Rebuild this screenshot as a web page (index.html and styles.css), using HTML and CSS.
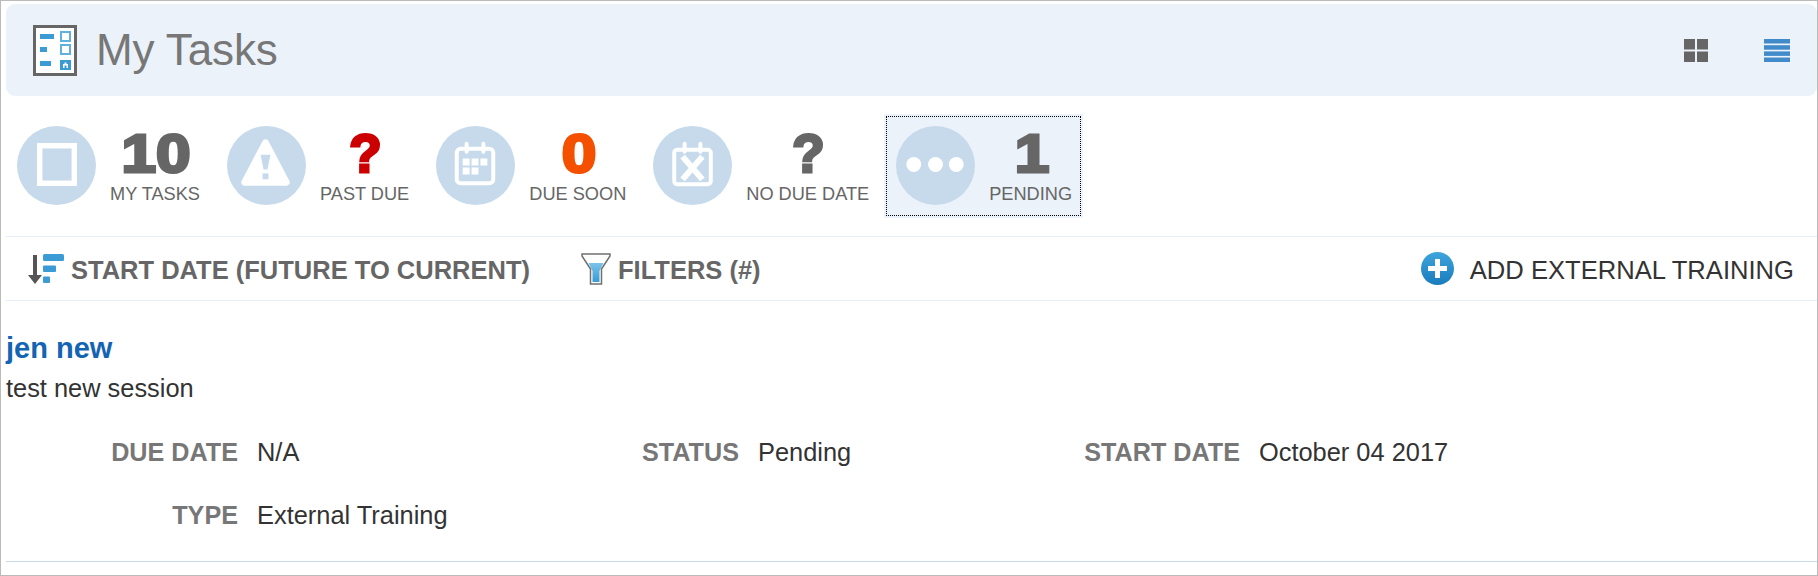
FILE: index.html
```html
<!DOCTYPE html>
<html lang="en">
<head>
  <meta charset="UTF-8">
  <title>My Tasks</title>
  <link rel="stylesheet" href="styles.css">
</head>
<body>
  <div class="page">
    <div class="header">
      <div class="header-title">
        <svg class="tasks-icon" width="44" height="51" viewBox="0 0 44 51">
          <rect x="1.500" y="1.500" width="41" height="48" fill="#fff" stroke="#666" stroke-width="3"/>
          <rect x="7" y="9" width="14" height="5" fill="#3a9bd5"/>
          <rect x="7" y="22" width="7" height="5" fill="#3a9bd5"/>
          <rect x="7" y="36" width="11" height="5" fill="#3a9bd5"/>
          <rect x="28" y="7" width="9" height="9" fill="#fff" stroke="#5fb2e0" stroke-width="2"/>
          <rect x="28" y="20" width="9" height="9" fill="#fff" stroke="#5fb2e0" stroke-width="2"/>
          <rect x="27" y="35" width="11" height="10" fill="#3a9bd5"/>
          <path d="M30 43v-4h1.500v-1.500h2v1.500H35v4h-1.500v-2.500h-2V43z" fill="#fff"/>
        </svg>
        <h1>My Tasks</h1>
      </div>
      <div class="view-switch">
        <svg width="24" height="23" viewBox="0 0 24 23">
          <rect x="0" y="0" width="11" height="10.500" fill="#666"/>
          <rect x="13" y="0" width="11" height="10.500" fill="#666"/>
          <rect x="0" y="12.500" width="11" height="10.500" fill="#666"/>
          <rect x="13" y="12.500" width="11" height="10.500" fill="#666"/>
        </svg>
        <svg width="26" height="23" viewBox="0 0 26 23">
          <rect y="0" width="26" height="4.500" fill="#428bca"/>
          <rect y="6.200" width="26" height="4.500" fill="#428bca"/>
          <rect y="12.400" width="26" height="4.500" fill="#428bca"/>
          <rect y="18.500" width="26" height="4.500" fill="#428bca"/>
        </svg>
      </div>
    </div>

    <div class="stats">
      <div class="stat">
        <svg class="stat-icon" viewBox="0 0 80 80">
          <circle cx="40" cy="40" r="40" fill="#c7daec"/>
          <rect x="23" y="20" width="35" height="38" fill="none" stroke="#fff" stroke-width="5.500"/>
        </svg>
        <div class="stat-text">
          <div class="stat-num"><span>10</span></div>
          <div class="stat-label">MY TASKS</div>
        </div>
      </div>
      <div class="stat">
        <svg class="stat-icon" viewBox="0 0 80 80">
          <circle cx="40" cy="40" r="40" fill="#c7daec"/>
          <path d="M39 17L60 57H18Z" fill="#fff" stroke="#fff" stroke-width="7" stroke-linejoin="round"/>
          <path d="M34 29h10l-3 15h-4z" fill="#c7daec"/>
          <rect x="36" y="48" width="6" height="6" fill="#c7daec"/>
        </svg>
        <div class="stat-text">
          <div class="stat-num red"><span class="mark">?</span></div>
          <div class="stat-label">PAST DUE</div>
        </div>
      </div>
      <div class="stat">
        <svg class="stat-icon" viewBox="0 0 80 80">
          <circle cx="40" cy="40" r="40" fill="#c7daec"/>
          <rect x="21" y="23" width="37" height="35" rx="4" fill="none" stroke="#fff" stroke-width="4"/>
          <path d="M31 18v8M48 18v8" stroke="#fff" stroke-width="4" stroke-linecap="round"/>
          <path d="M27 33h7v7h-7zM36 33h7v7h-7zM45 33h7v7h-7zM27 42h7v7h-7zM36 42h7v7h-7z" fill="#fff"/>
        </svg>
        <div class="stat-text">
          <div class="stat-num orange"><span>0</span></div>
          <div class="stat-label">DUE SOON</div>
        </div>
      </div>
      <div class="stat">
        <svg class="stat-icon" viewBox="0 0 80 80">
          <circle cx="40" cy="40" r="40" fill="#c7daec"/>
          <rect x="21.500" y="24" width="37" height="35" rx="3" fill="none" stroke="#fff" stroke-width="4"/>
          <path d="M32 18v8M48 18v8" stroke="#fff" stroke-width="4" stroke-linecap="round"/>
          <path d="M30 31L50 54M50 31L30 54" stroke="#fff" stroke-width="6"/>
        </svg>
        <div class="stat-text">
          <div class="stat-num"><span class="mark">?</span></div>
          <div class="stat-label">NO DUE DATE</div>
        </div>
      </div>
      <div class="stat active">
        <svg class="stat-icon" viewBox="0 0 80 80">
          <circle cx="40" cy="40" r="40" fill="#c7daec"/>
          <circle cx="18" cy="39" r="7.500" fill="#fff"/>
          <circle cx="40" cy="39" r="7.500" fill="#fff"/>
          <circle cx="61" cy="39" r="7.500" fill="#fff"/>
        </svg>
        <div class="stat-text">
          <div class="stat-num"><span>1</span></div>
          <div class="stat-label">PENDING</div>
        </div>
      </div>
    </div>

    <div class="toolbar">
      <div class="tool sort">
        <svg width="36" height="30" viewBox="0 0 36 30">
          <path d="M5 1h4v20h5l-7 9-7-9h5z" fill="#555"/>
          <rect x="15" y="0" width="21" height="7" rx="1.500" fill="#3a9bd5"/>
          <rect x="15" y="11.500" width="13" height="6.500" rx="1" fill="#3a9bd5"/>
          <rect x="15" y="22.500" width="7" height="6.500" rx="1" fill="#3a9bd5"/>
        </svg>
        <span>START DATE (FUTURE TO CURRENT)</span>
      </div>
      <div class="tool filter">
        <svg width="30" height="32" viewBox="0 0 30 32">
          <defs>
            <linearGradient id="filterBlue" x1="0" y1="0" x2="0" y2="1">
              <stop offset="0" stop-color="#7cc4ea"/>
              <stop offset="1" stop-color="#3a9bd5"/>
            </linearGradient>
          </defs>
          <path d="M7.500 10h15l-4 8v11h-7V18z" fill="url(#filterBlue)"/>
          <path d="M1 1h28v2l-8.500 13v15h-11V16L1 3z" fill="none" stroke="#707070" stroke-width="1.500"/>
        </svg>
        <span>FILTERS (#)</span>
      </div>
      <div class="tool add">
        <svg width="33" height="33" viewBox="0 0 33 33">
          <defs>
            <linearGradient id="addBlue" x1="0" y1="0" x2="0" y2="1">
              <stop offset="0" stop-color="#3fa4dc"/>
              <stop offset="1" stop-color="#1a7cbc"/>
            </linearGradient>
          </defs>
          <circle cx="16.500" cy="16.500" r="16.500" fill="url(#addBlue)"/>
          <path d="M14 7h5v7h7v5h-7v7h-5v-7H7v-5h7z" fill="#fff"/>
        </svg>
        <span>ADD EXTERNAL TRAINING</span>
      </div>
    </div>

    <div class="task">
      <a class="task-name" href="#">jen new</a>
      <div class="task-desc">test new session</div>
      <div class="task-fields">
        <div class="field"><span class="field-label">DUE DATE</span><span>N/A</span></div>
        <div class="field"><span class="field-label">STATUS</span><span>Pending</span></div>
        <div class="field"><span class="field-label">START DATE</span><span>October 04 2017</span></div>
        <div class="field"><span class="field-label">TYPE</span><span>External Training</span></div>
      </div>
    </div>
  </div>
</body>
</html>
```

FILE: styles.css
```css
* {
  box-sizing: border-box;
}

body {
  margin: 0;
  font-family: "Liberation Sans", Arial, sans-serif;
  background-color: #ffffff;
  color: #333333;
}

.page {
  height: 576px;
  border: 1px solid #bbbbbb;
  padding: 3px 0 0 5px;
  overflow: hidden;
}

.header {
  height: 92px;
  background-color: #ebf2fa;
  border-radius: 9px;
  display: flex;
  align-items: center;
  justify-content: space-between;
  padding: 0 27px;
}

.header-title {
  display: flex;
  align-items: center;
  gap: 19px;
}

.header-title h1 {
  margin: 0;
  font-size: 44px;
  font-weight: 400;
  letter-spacing: -0.1px;
  color: #777777;
}

.view-switch {
  display: flex;
  align-items: center;
  gap: 56px;
}

.stats {
  display: flex;
  gap: 3px;
  margin: 18px 0 0 -1px;
  height: 104px;
}

.stat {
  display: flex;
  align-items: center;
  gap: 14px;
  padding: 0 12px 2px;
}

.stat-icon {
  width: 79px;
  height: 79px;
  flex: none;
}

.stat-text {
  text-align: center;
  color: #666666;
}

.stat-num {
  font-size: 54px;
  line-height: 57px;
  font-weight: 700;
  -webkit-text-stroke: 3px currentColor;
}

.stat-num span {
  display: inline-block;
  transform: translateX(1px) scaleX(1.15);
}

.stat-num .mark {
  transform: translateX(1px) scaleX(0.98);
}

.red {
  color: #cc0000;
}

.orange {
  color: #f55000;
}

.stat-label {
  font-size: 18.2px;
  line-height: 24px;
  white-space: nowrap;
}

.stat.active {
  background-color: #ebf2fa;
  outline: 1px dotted #000000;
  outline-offset: -3px;
  padding-right: 11px;
}

.toolbar {
  display: flex;
  align-items: center;
  height: 65px;
  margin-top: 18px;
  border-top: 1px solid #e6eff7;
  border-bottom: 1px solid #e6eff7;
  padding: 0 23px 0 22px;
}

.tool {
  display: flex;
  align-items: center;
  gap: 7px;
  font-size: 25.5px;
  font-weight: 700;
  color: #666666;
}

.tool span {
  position: relative;
  top: 2px;
}

.filter {
  margin-left: 51px;
}

.add {
  margin-left: auto;
  gap: 16px;
  font-size: 25.6px;
  font-weight: 400;
  color: #333333;
}

.task {
  margin-top: 31px;
  font-size: 25.4px;
  height: 230px;
  border-bottom: 1px solid #c9dbe9;
}

.task-name {
  display: block;
  font-size: 29px;
  font-weight: 700;
  color: #1464b4;
  text-decoration: none;
}

.task-desc {
  margin-top: 9px;
}

.task-fields {
  display: grid;
  grid-template-columns: repeat(3, 501px);
  row-gap: 34px;
  margin-top: 35px;
}

.field {
  display: flex;
  gap: 19px;
}

.field-label {
  width: 232px;
  text-align: right;
  font-size: 25.2px;
  font-weight: 700;
  color: #777777;
}
```
